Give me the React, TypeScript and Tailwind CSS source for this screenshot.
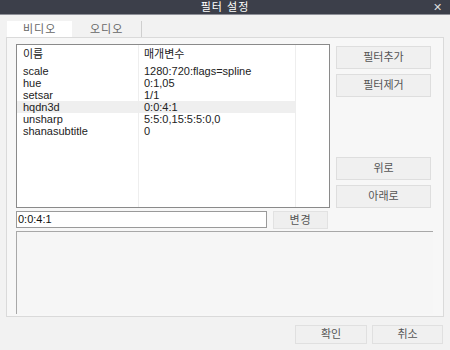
import React from "react";

const rows = [
  { name: "scale", value: "1280:720:flags=spline" },
  { name: "hue", value: "0:1,05" },
  { name: "setsar", value: "1/1" },
  { name: "hqdn3d", value: "0:0:4:1", selected: true },
  { name: "unsharp", value: "5:5:0,15:5:5:0,0" },
  { name: "shanasubtitle", value: "0" },
];

const font = { fontFamily: '"Liberation Sans", "Noto Sans CJK KR", sans-serif' };

function SideButton({ label }: { label: string }) {
  return (
    <button className="w-full h-[23px] bg-[#f0f0f0] border border-[#dedede] text-[11px] text-[#555] leading-none">
      {label}
    </button>
  );
}

export default function App() {
  return (
    <div className="w-[450px] h-[350px] bg-[#f2f2f2] flex flex-col overflow-hidden" style={font}>
      {/* title bar */}
      <div className="h-[15px] bg-[#3c3f4a] border-b border-[#8e9098] grid grid-cols-[1fr_auto_1fr] items-center text-white">
        <div />
        <div className="text-[11px] leading-none tracking-[1px]">필터 설정</div>
        <div className="flex justify-end pr-[8px] text-[11px] leading-none text-[#ddd]">✕</div>
      </div>

      {/* tabs */}
      <div className="flex pl-[7px] pt-[6px] h-[22px]">
        <div className="w-[65px] bg-white flex items-center pl-[16px] text-[11px] text-[#666] tracking-[1px]">
          비디오
        </div>
        <div className="w-[70px] border-r border-[#cfcfcf] flex items-center pl-[18px] text-[11px] text-[#666] tracking-[1px]">
          오디오
        </div>
      </div>

      {/* tab pane */}
      <div className="mx-[6px] h-[280px] border border-[#dadada] bg-[#f7f7f7] pl-[9px] pr-[11px] pt-[6px] flex flex-col">
        <div className="flex">
          <div className="w-[314px] h-[164px] bg-white border border-[#8a8a8a] flex flex-col text-[11px] text-[#222]">
            <div className="grid grid-cols-[122px_157px_1fr] h-[20px]">
              <div className="border-r border-[#eeeeee] pl-[6px] pt-[3px] leading-[12px]">이름</div>
              <div className="border-r border-[#eeeeee] pl-[5px] pt-[3px] leading-[12px]">매개변수</div>
              <div />
            </div>
            {rows.map((r) => (
              <div key={r.name} className="grid grid-cols-[122px_157px_1fr] h-[12px] leading-[12px]">
                <div className={`border-r border-[#eeeeee] pl-[6px] ${r.selected ? "bg-[#efefef]" : ""}`}>{r.name}</div>
                <div className={`border-r border-[#eeeeee] pl-[5px] ${r.selected ? "bg-[#efefef]" : ""}`}>{r.value}</div>
                <div />
              </div>
            ))}
            <div className="grid grid-cols-[122px_157px_1fr] flex-1">
              <div className="border-r border-[#eeeeee]" />
              <div className="border-r border-[#eeeeee]" />
              <div />
            </div>
          </div>
          <div className="ml-[6px] w-[95px] flex flex-col pt-[2px]">
            <SideButton label="필터추가" />
            <div className="h-[5px]" />
            <SideButton label="필터제거" />
            <div className="flex-1" />
            <SideButton label="위로" />
            <div className="h-[5px]" />
            <SideButton label="아래로" />
          </div>
        </div>

        <div className="flex mt-[3px] items-start">
          <div className="w-[251px] h-[17px] bg-white border border-[#9a9a9a] text-[11px] text-[#111] leading-[15px] pl-[1px]">
            0:0:4:1
          </div>
          <button className="ml-[6px] w-[55px] h-[18px] bg-[#efefef] border border-[#e2e2e2] text-[11px] text-[#555] leading-none tracking-[1px]">
            변경
          </button>
        </div>

        <div className="mt-[2px] mr-[-1px] h-[83px] border-t border-l border-[#a8a8a8] bg-[#f6f6f6]" />
      </div>

      {/* bottom buttons */}
      <div className="flex justify-end gap-[5px] pr-[7px] pt-[8px]">
        <button className="w-[72px] h-[19px] bg-[#f0f0f0] border border-[#e0e0e0] text-[11px] text-[#555] leading-none">
          확인
        </button>
        <button className="w-[71px] h-[19px] bg-[#f0f0f0] border border-[#e0e0e0] text-[11px] text-[#555] leading-none">
          취소
        </button>
      </div>
    </div>
  );
}
